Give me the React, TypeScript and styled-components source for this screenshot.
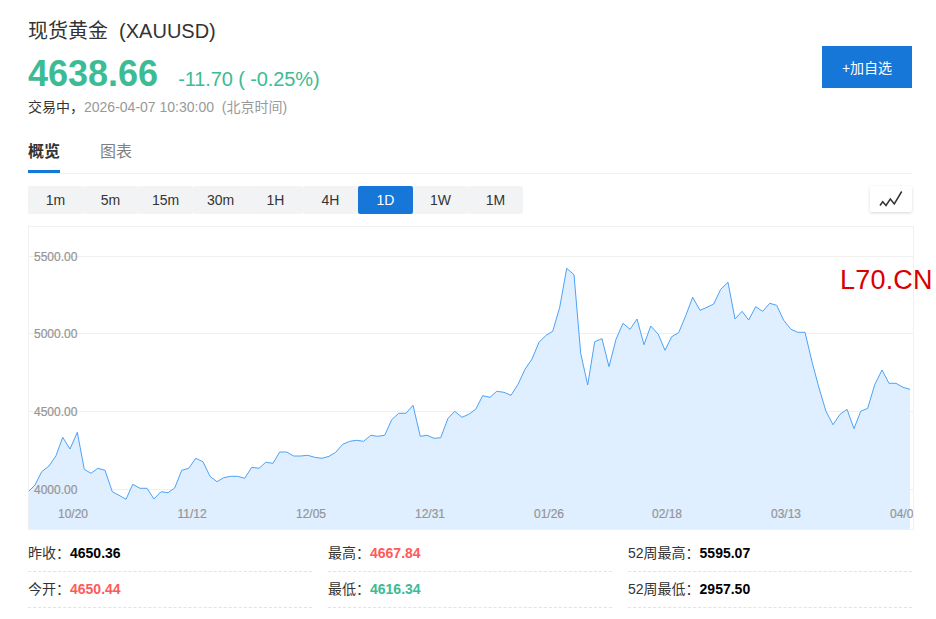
import React from "react";
import styled, { createGlobalStyle } from "styled-components";

const SANS = `"Liberation Sans", Arial, "Noto Sans CJK SC", sans-serif`;

const GlobalStyle = createGlobalStyle`
  html, body { margin: 0; padding: 0; background: #fff; }
  body { font-family: ${SANS}; color: #333; overflow: hidden; }
  * { box-sizing: border-box; }
`;

const Page = styled.div`
  position: relative;
  width: 936px;
  height: 619px;
  padding: 18px 24px 0 28px;
  overflow: hidden;
`;

const Header = styled.header`
  display: flex;
  justify-content: space-between;
  align-items: flex-start;
  height: 113px;
`;

const Title = styled.h1`
  margin: 0;
  font-size: 20px;
  line-height: 26px;
  font-weight: 400;
  color: #333;
  white-space: pre;
`;

const PriceRow = styled.div`
  display: flex;
  align-items: baseline;
  margin-top: 8px;
  height: 44px;
`;

const Price = styled.span`
  font-size: 36px;
  line-height: 44px;
  font-weight: 700;
  color: #3dbb95;
`;

const Change = styled.span`
  margin-left: 20px;
  font-size: 20px;
  letter-spacing: -0.1px;
  color: #3dbb95;
`;

const Status = styled.div`
  margin-top: 1px;
  font-size: 14px;
  line-height: 20px;
  color: #333;
  white-space: pre;
`;

const Muted = styled.span`
  color: #999;
`;

const AddButton = styled.button`
  width: 90px;
  height: 42px;
  margin-top: 28px;
  border: 0;
  padding: 0;
  background: #1677d9;
  color: #fff;
  font: 400 14px ${SANS};
`;

const Tabs = styled.nav`
  display: flex;
  gap: 40px;
  height: 43px;
  border-bottom: 1px solid #f0f0f0;
`;

const Tab = styled.div<{ $active?: boolean }>`
  height: 42px;
  padding-top: 8px;
  font-size: 16px;
  line-height: 26px;
  font-weight: ${(p) => (p.$active ? 700 : 400)};
  color: ${(p) => (p.$active ? "#333" : "#808080")};
  border-bottom: ${(p) => (p.$active ? "3px solid #1677d9" : "0")};
`;

const Toolbar = styled.div`
  display: flex;
  justify-content: space-between;
  align-items: flex-start;
  margin-top: 12px;
  height: 40px;
`;

const Intervals = styled.div`
  display: flex;
`;

const Interval = styled.div<{ $active?: boolean }>`
  width: 55px;
  height: 28px;
  display: flex;
  align-items: center;
  justify-content: center;
  font-size: 14px;
  border-radius: 2px;
  background: ${(p) => (p.$active ? "#1677d9" : "#f2f3f5")};
  color: ${(p) => (p.$active ? "#fff" : "#333")};
`;

const ChartToggle = styled.div`
  width: 42px;
  height: 26px;
  display: flex;
  align-items: center;
  justify-content: center;
  border-radius: 2px;
  background: #fff;
  box-shadow: 0 1px 3px rgba(0, 0, 0, 0.16);
`;

const ChartBox = styled.div`
  width: 886px;
  height: 304px;
  border: 1px solid #f0f0f0;
`;

const ChartSvg = styled.svg`
  display: block;
`;

const AxisText = styled.text`
  font-family: ${SANS};
  font-size: 12px;
  fill: #959595;
  stroke: #959595;
  stroke-width: 0.2px;
`;

const Watermark = styled.div`
  position: absolute;
  left: 840px;
  top: 264px;
  font-size: 27px;
  line-height: 32px;
  letter-spacing: 0.2px;
  color: #d90000;
  white-space: nowrap;
`;

const Stats = styled.div`
  display: grid;
  grid-template-columns: repeat(3, 284px);
  column-gap: 16px;
  margin-top: 6px;
`;

const Stat = styled.div`
  height: 36px;
  padding-top: 5px;
  font-size: 14px;
  line-height: 24px;
  border-bottom: 1px dashed #e3e3e3;
  white-space: nowrap;
  color: #333;
`;

const Value = styled.b<{ $tone?: "up" | "down" }>`
  font-weight: 700;
  color: ${(p) =>
    p.$tone === "up" ? "#ff5a5a" : p.$tone === "down" ? "#3dbb95" : "#000"};
`;

const zoom3 = [
  [25, 815], [45, 795], [65, 755], [87, 738], [108, 707], [128, 652], [150, 687], [172, 637], [193, 748], [213, 760],
  [233, 745], [255, 751], [277, 815], [297, 826], [318, 838], [338, 793], [360, 805], [381, 805], [402, 837], [423, 815],
  [444, 818], [464, 804], [485, 751], [506, 745], [527, 715], [549, 725], [570, 769], [591, 785], [611, 773], [632, 769],
  [653, 769], [674, 775], [695, 742], [717, 745], [737, 727], [759, 730], [779, 696], [800, 696], [821, 708], [842, 708],
  [863, 706], [884, 712],
].map(([x, y]) => [20 + x / 3, 220 + y / 3]);

const zoom4 = [
  [15, 622], [36, 625], [57, 619], [77, 607], [98, 583], [119, 574], [140, 571], [161, 574], [182, 556], [203, 559],
  [224, 556], [245, 509], [266, 490], [288, 490], [309, 466], [331, 559], [351, 556], [372, 565], [392, 563], [414, 505],
  [434, 484], [456, 502], [476, 493], [497, 478], [518, 437], [540, 442], [560, 424], [582, 427], [603, 436], [624, 403],
  [645, 358], [666, 327], [687, 277], [708, 256], [728, 244], [749, 172], [770, 55], [792, 74], [812, 310], [833, 405],
  [854, 275], [876, 266], [897, 350],
].map(([x, y]) => [310 + x / 3, 250 + y / 3]);

const zoom5 = [
  [18, 268], [39, 220], [60, 238], [81, 207], [102, 284], [122, 228], [145, 253], [165, 301], [185, 260], [206, 248],
  [227, 197], [248, 142], [270, 181], [291, 172], [311, 162], [332, 118], [354, 97], [375, 207], [396, 184], [416, 210],
  [437, 170], [458, 184], [479, 160], [500, 166], [521, 211], [543, 238], [563, 247], [585, 247], [606, 335], [627, 414],
  [648, 484], [669, 524], [690, 493], [711, 478], [732, 536], [752, 484], [773, 475], [794, 404], [816, 360], [837, 400],
  [858, 400], [879, 412], [900, 418],
].map(([x, y]) => [610 + x / 3, 250 + y / 3]);

// Page coordinates of the price line, shifted into the chart box (origin 29,227).
const points = [...zoom3, ...zoom4.slice(1), ...zoom5].map(([x, y]) => [x - 29, y - 227]);
const linePath = points.map(([x, y], i) => `${i ? "L" : "M"}${x.toFixed(1)} ${y.toFixed(1)}`).join(" ");
const lastX = points[points.length - 1][0];
const areaPath = `${linePath} L${lastX.toFixed(1)} 302 L0 302 Z`;

const gridY = [29.5, 106.5, 184.5, 262.5];
const yLabels = ["5500.00", "5000.00", "4500.00", "4000.00"];
const xLabels: [string, number][] = [
  ["10/20", 44],
  ["11/12", 163],
  ["12/05", 282],
  ["12/31", 401],
  ["01/26", 520],
  ["02/18", 638],
  ["03/13", 757],
  ["04/03", 876],
];

const intervals = ["1m", "5m", "15m", "30m", "1H", "4H", "1D", "1W", "1M"];

export default function App() {
  return (
    <Page>
      <GlobalStyle />
      <Header>
        <div>
          <Title>现货黄金  (XAUUSD)</Title>
          <PriceRow>
            <Price>4638.66</Price>
            <Change>-11.70 ( -0.25%)</Change>
          </PriceRow>
          <Status>
            交易中，<Muted>2026-04-07 10:30:00  (北京时间)</Muted>
          </Status>
        </div>
        <AddButton>+加自选</AddButton>
      </Header>
      <Tabs>
        <Tab $active>概览</Tab>
        <Tab>图表</Tab>
      </Tabs>
      <Toolbar>
        <Intervals>
          {intervals.map((t) => (
            <Interval key={t} $active={t === "1D"}>
              {t}
            </Interval>
          ))}
        </Intervals>
        <ChartToggle>
          <svg width="24" height="16" viewBox="0 0 24 16" fill="none" stroke="#333" strokeWidth="1.5">
            <path d="M1 14.5 L3.7 10.7 L7 14.5 L11.3 8 L15.3 13 L22.7 0.5" />
          </svg>
        </ChartToggle>
      </Toolbar>
      <ChartBox>
        <ChartSvg width="884" height="302" viewBox="0 0 884 302">
          {gridY.map((y) => (
            <line key={y} x1="0" x2="884" y1={y} y2={y} stroke="#efefef" />
          ))}
          <path d={areaPath} fill="#dfefff" />
          <path d={linePath} fill="none" stroke="#4da2f7" strokeWidth="1" />
          {yLabels.map((l, i) => (
            <AxisText key={l} x="5" y={gridY[i] + 4}>
              {l}
            </AxisText>
          ))}
          {xLabels.map(([l, x]) => (
            <AxisText key={l} x={x} y="291" textAnchor="middle">
              {l}
            </AxisText>
          ))}
        </ChartSvg>
      </ChartBox>
      <Stats>
        <Stat>昨收：<Value>4650.36</Value></Stat>
        <Stat>最高：<Value $tone="up">4667.84</Value></Stat>
        <Stat>52周最高：<Value>5595.07</Value></Stat>
        <Stat>今开：<Value $tone="up">4650.44</Value></Stat>
        <Stat>最低：<Value $tone="down">4616.34</Value></Stat>
        <Stat>52周最低：<Value>2957.50</Value></Stat>
      </Stats>
      <Watermark>L70.CN</Watermark>
    </Page>
  );
}
